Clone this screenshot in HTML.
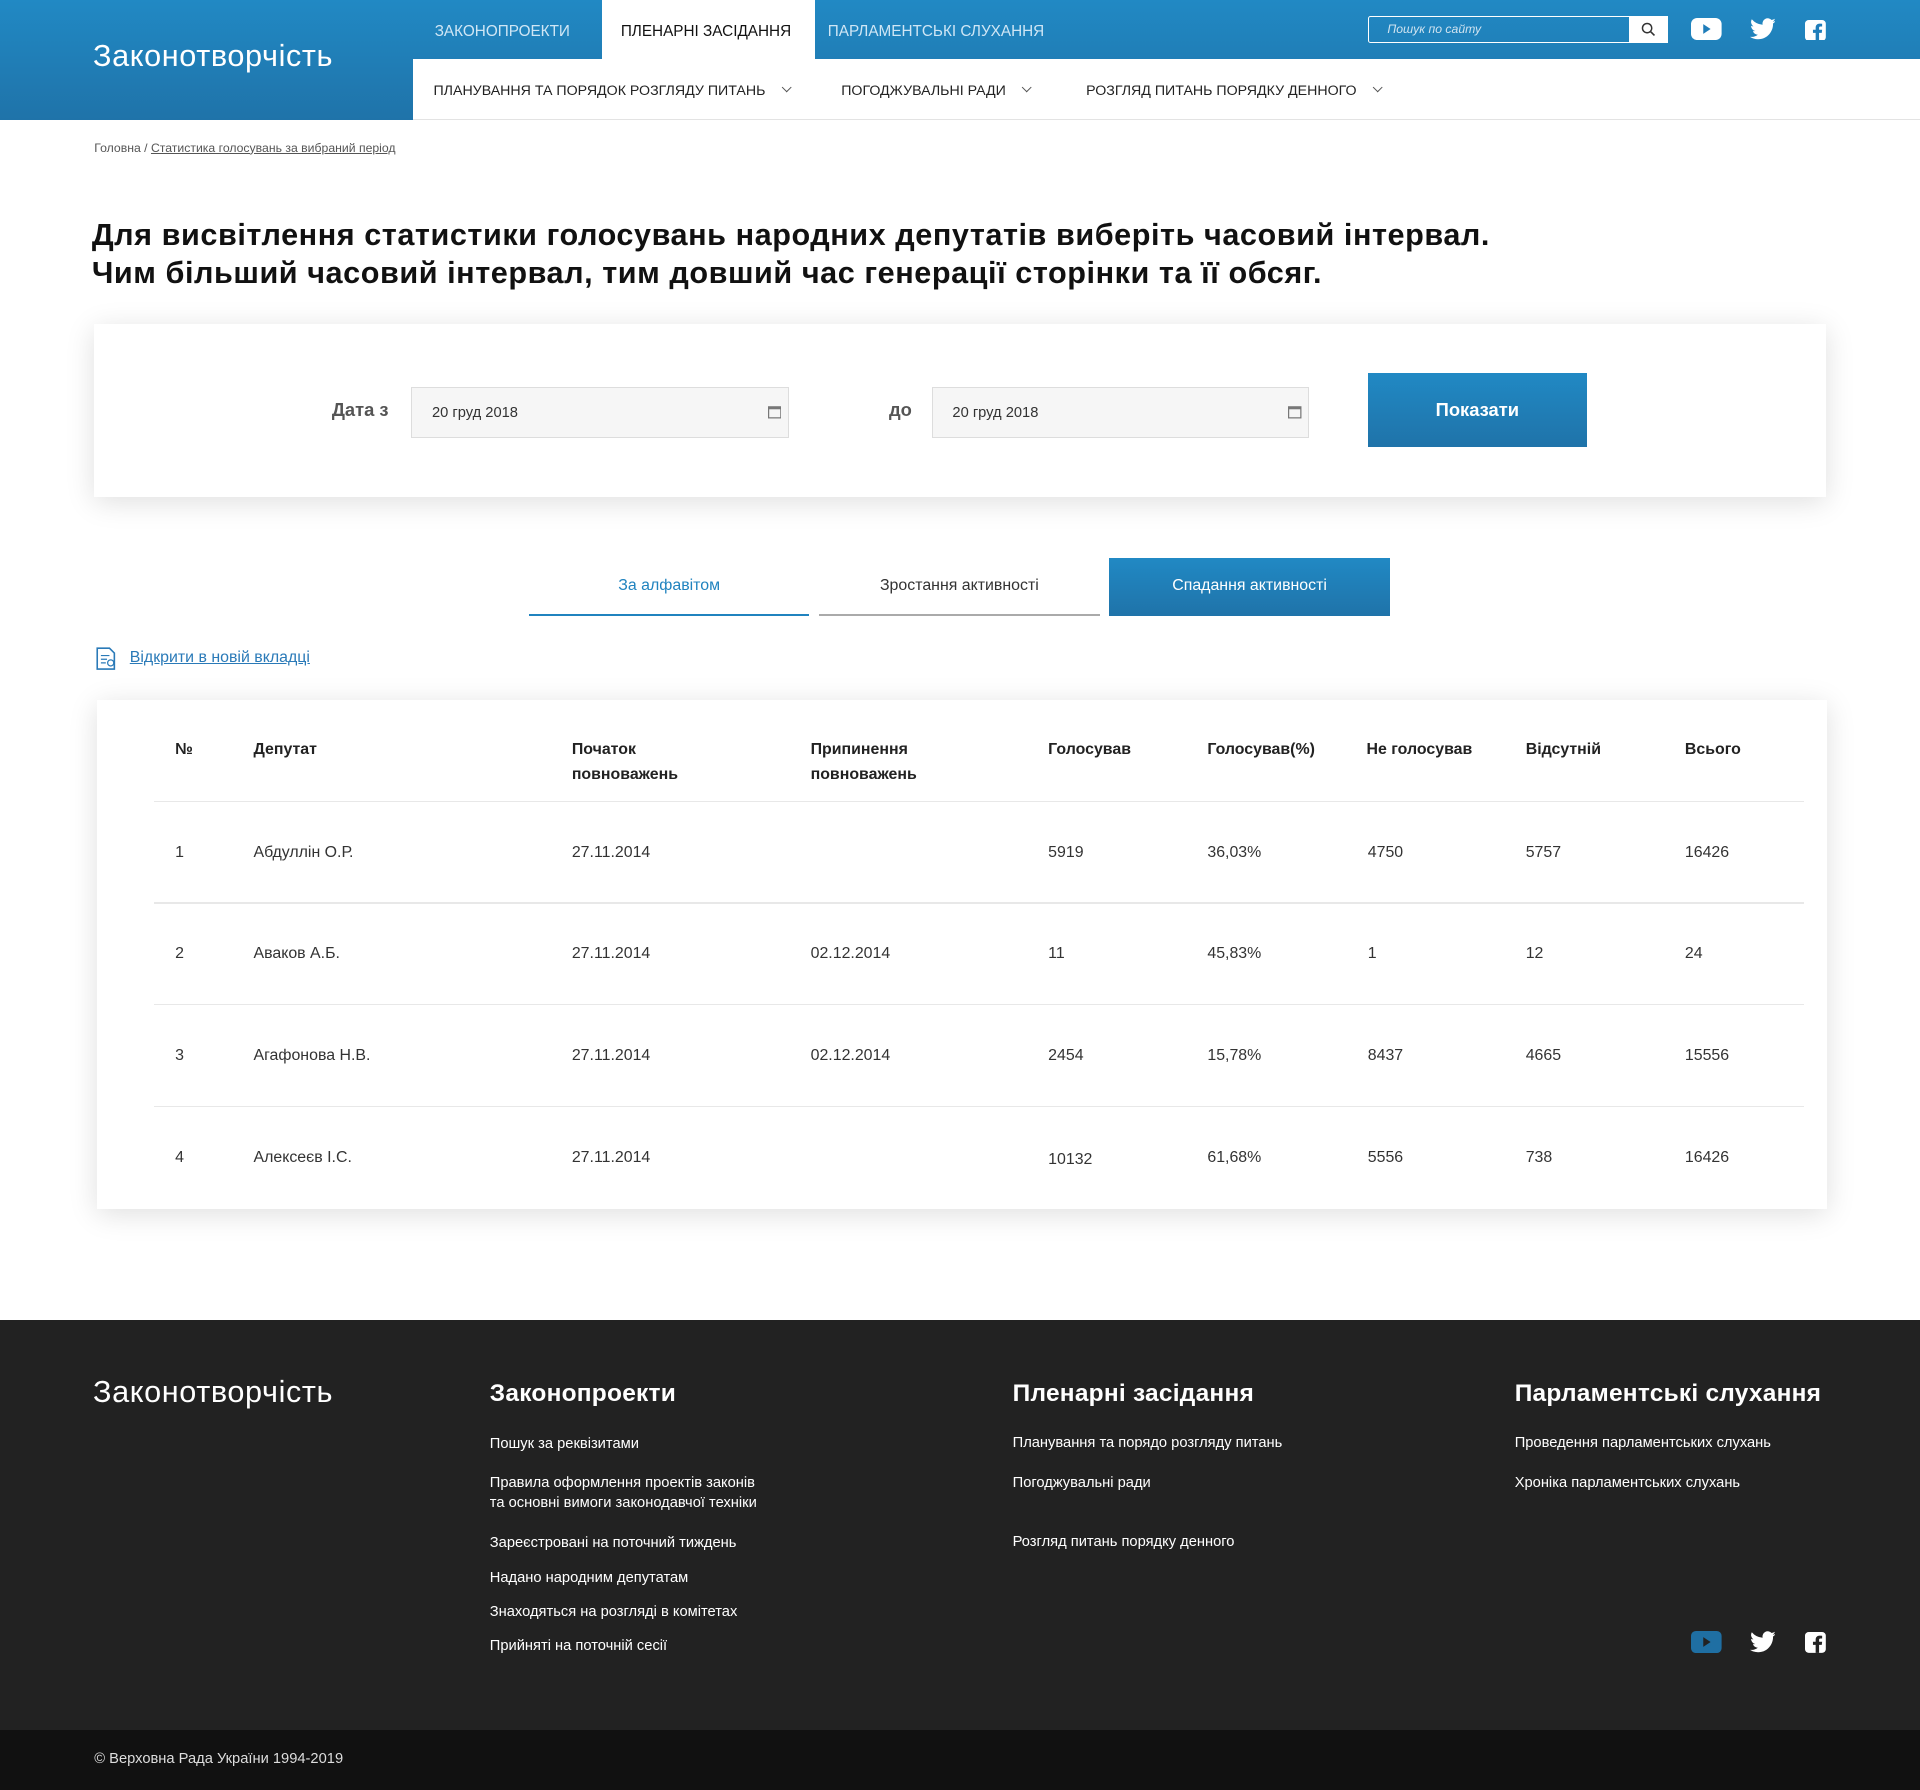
<!DOCTYPE html>
<html><head><meta charset="utf-8"><style>
html{zoom:1.22449}
*{box-sizing:border-box;margin:0;padding:0}
body{width:1568px;height:1462px;position:relative;font-family:"Liberation Sans","DejaVu Sans",sans-serif;background:#fff;color:#222;overflow:hidden}
.a{position:absolute;white-space:nowrap}
.hdr{position:absolute;left:0;top:0;width:1568px;height:98px;background:linear-gradient(#2189c4,#1f73a9)}
.sub{position:absolute;left:337px;top:48px;width:1231px;height:50px;background:#fff;border-bottom:1px solid #e3e3e3}
.tn{font-size:12.5px;color:#cfe6f5;top:19px}
.sn{font-size:11.6px;color:#222;top:68px}
.chev{display:inline-block;width:6px;height:6px;border-right:1px solid #555;border-bottom:1px solid #555;transform:rotate(45deg);margin-left:14px;position:relative;top:-3px}
.card{position:absolute;background:#fff;box-shadow:0 4px 22px rgba(0,0,0,.13)}
.inp{position:absolute;height:42px;width:308px;background:#f6f6f6;border:1px solid #ddd;font-size:12px;padding:14px 16px;color:#333}
.th{font-size:13px;font-weight:bold;color:#222;line-height:20px;top:603px}
.td{font-size:13px;color:#333;margin-top:2px}
.hl{position:absolute;left:126px;width:1347px;height:1px;background:#e8e8e8}
.fh{font-size:20px;font-weight:bold;color:#fff;top:1127px;letter-spacing:.2px}
.fl{font-size:12px;color:#fff;line-height:16px;margin-top:1px}
</style></head><body>
<div class="hdr"></div>
<div class="a" style="left:76px;top:32px;font-size:25px;color:#fff;letter-spacing:.5px">Законотворчість</div>
<div class="a" style="left:492px;top:0;width:174px;height:49px;background:#fff"></div>
<div class="a tn" style="left:355px">ЗАКОНОПРОЕКТИ</div>
<div class="a tn" style="left:507px;color:#111">ПЛЕНАРНІ ЗАСІДАННЯ</div>
<div class="a tn" style="left:676px">ПАРЛАМЕНТСЬКІ СЛУХАННЯ</div>
<div class="a" style="left:1117px;top:13px;width:245px;height:22px;border:1px solid #fff;border-radius:2px"></div>
<div class="a" style="left:1133px;top:18px;font-size:10px;font-style:italic;color:#cfe3f0">Пошук по сайту</div>
<div class="a" style="left:1330px;top:13px;width:32px;height:22px;background:#fff"></div>
<svg class="a" style="left:1340px;top:18px" width="12" height="12" viewBox="0 0 12 12"><circle cx="5" cy="5" r="3.8" fill="none" stroke="#333" stroke-width="1.2"/><path d="M8 8l3 3" stroke="#333" stroke-width="1.3"/></svg>
<svg class="a" style="left:1381px;top:15px" width="25" height="18" viewBox="0 0 25 18"><rect width="25" height="18" rx="5" fill="#fff"/><path d="M10 5l6 4-6 4z" fill="#1f7dba"/></svg>
<svg class="a" style="left:1429px;top:15px" width="21" height="18" viewBox="0 0 24 20"><path fill="#fff" d="M24 2.4a10 10 0 0 1-2.8.8A5 5 0 0 0 23.3.4a10 10 0 0 1-3.1 1.2A4.9 4.9 0 0 0 11.8 6 14 14 0 0 1 1.7.9a4.9 4.9 0 0 0 1.5 6.6A4.9 4.9 0 0 1 1 6.9a4.9 4.9 0 0 0 3.9 4.9 5 5 0 0 1-2.2.1 4.9 4.9 0 0 0 4.6 3.4A9.9 9.9 0 0 1 0 17.3 14 14 0 0 0 7.5 19.5c9 0 14-7.5 14-14v-.6A10 10 0 0 0 24 2.4z"/></svg>
<svg class="a" style="left:1474px;top:16px" width="17" height="17" viewBox="0 0 17 17"><rect width="17" height="17" rx="3" fill="#fff"/><path d="M11.5 17V10.5h2.2l.3-2.5h-2.5V6.5c0-.7.2-1.2 1.2-1.2H14V3.1a18 18 0 0 0-2-.1c-2 0-3.3 1.2-3.3 3.4V8H6.5v2.5h2.2V17z" fill="#1f7dba"/></svg>
<div class="sub"></div>
<div class="a sn" style="left:354px">ПЛАНУВАННЯ ТА ПОРЯДОК РОЗГЛЯДУ ПИТАНЬ<span class="chev"></span></div>
<div class="a sn" style="left:687px">ПОГОДЖУВАЛЬНІ РАДИ<span class="chev"></span></div>
<div class="a sn" style="left:887px">РОЗГЛЯД ПИТАНЬ ПОРЯДКУ ДЕННОГО<span class="chev"></span></div>
<div class="a" style="left:77px;top:115px;font-size:10px;color:#555">Головна / <span style="text-decoration:underline">Статистика голосувань за вибраний період</span></div>
<div class="a" style="left:75px;top:177px;font-size:25px;font-weight:bold;line-height:31px;color:#111;letter-spacing:.45px">Для висвітлення статистики голосувань народних депутатів виберіть часовий інтервал.<br>Чим більший часовий інтервал, тим довший час генерації сторінки та її обсяг.</div>
<div class="card" style="left:77px;top:265px;width:1414px;height:141px"></div>
<div class="a" style="left:271px;top:326px;font-size:15px;font-weight:bold;color:#555">Дата з</div>
<div class="inp" style="left:336px;top:316px">20 груд 2018</div>
<div class="a" style="left:726px;top:326px;font-size:15px;font-weight:bold;color:#555">до</div>
<div class="inp" style="left:761px;top:316px">20 груд 2018</div>
<svg class="a" style="left:627px;top:331px" width="11" height="11" viewBox="0 0 11 11"><rect x=".5" y="1.5" width="10" height="9" fill="none" stroke="#777"/><rect x=".5" y="1.5" width="10" height="2" fill="#777"/></svg>
<svg class="a" style="left:1052px;top:331px" width="11" height="11" viewBox="0 0 11 11"><rect x=".5" y="1.5" width="10" height="9" fill="none" stroke="#777"/><rect x=".5" y="1.5" width="10" height="2" fill="#777"/></svg>
<div class="a" style="left:1117px;top:305px;width:179px;height:60px;background:linear-gradient(#2189c4,#1f73a9);color:#fff;font-size:15px;font-weight:bold;text-align:center;line-height:60px">Показати</div>
<div class="a" style="left:432px;top:456px;width:229px;height:47px;border-bottom:2px solid #2083bf;color:#2083bf;font-size:13px;text-align:center;line-height:46px">За алфавітом</div>
<div class="a" style="left:669px;top:456px;width:229px;height:47px;border-bottom:2px solid #aaa;color:#333;font-size:13px;text-align:center;line-height:46px">Зростання активності</div>
<div class="a" style="left:906px;top:456px;width:229px;height:47px;background:linear-gradient(#2189c4,#1f73a9);color:#fff;font-size:13px;text-align:center;line-height:46px">Спадання активності</div>
<svg class="a" style="left:78px;top:528px" width="18" height="19" viewBox="0 0 18 19"><path d="M1 1h10l4 4v13H1z" fill="none" stroke="#2a7ab8" stroke-width="1.3"/><path d="M4 7h7M4 10h5M4 13h4" stroke="#2a7ab8"/><circle cx="12" cy="13" r="2.5" fill="none" stroke="#2a7ab8"/></svg>
<div class="a" style="left:106px;top:530px;font-size:13px;color:#2a7ab8;text-decoration:underline">Відкрити в новій вкладці</div>
<div class="card" style="left:79px;top:572px;width:1413px;height:415px"></div>
<div class="a th" style="left:143px">№</div>
<div class="a th" style="left:207px">Депутат</div>
<div class="a th" style="left:467px">Початок<br>повноважень</div>
<div class="a th" style="left:662px">Припинення<br>повноважень</div>
<div class="a th" style="left:856px">Голосував</div>
<div class="a th" style="left:986px">Голосував(%)</div>
<div class="a th" style="left:1116px">Не голосував</div>
<div class="a th" style="left:1246px">Відсутній</div>
<div class="a th" style="left:1376px">Всього</div>
<div class="hl" style="top:654px"></div>
<div class="hl" style="top:737px"></div>
<div class="hl" style="top:820px"></div>
<div class="hl" style="top:903px"></div>
<div class="a td" style="left:143px;top:687px">1</div><div class="a td" style="left:207px;top:687px">Абдуллін О.Р.</div><div class="a td" style="left:467px;top:687px">27.11.2014</div><div class="a td" style="left:856px;top:687px">5919</div><div class="a td" style="left:986px;top:687px">36,03%</div><div class="a td" style="left:1117px;top:687px">4750</div><div class="a td" style="left:1246px;top:687px">5757</div><div class="a td" style="left:1376px;top:687px">16426</div>
<div class="a td" style="left:143px;top:770px">2</div><div class="a td" style="left:207px;top:770px">Аваков А.Б.</div><div class="a td" style="left:467px;top:770px">27.11.2014</div><div class="a td" style="left:662px;top:770px">02.12.2014</div><div class="a td" style="left:856px;top:770px">11</div><div class="a td" style="left:986px;top:770px">45,83%</div><div class="a td" style="left:1117px;top:770px">1</div><div class="a td" style="left:1246px;top:770px">12</div><div class="a td" style="left:1376px;top:770px">24</div>
<div class="a td" style="left:143px;top:853px">3</div><div class="a td" style="left:207px;top:853px">Агафонова Н.В.</div><div class="a td" style="left:467px;top:853px">27.11.2014</div><div class="a td" style="left:662px;top:853px">02.12.2014</div><div class="a td" style="left:856px;top:853px">2454</div><div class="a td" style="left:986px;top:853px">15,78%</div><div class="a td" style="left:1117px;top:853px">8437</div><div class="a td" style="left:1246px;top:853px">4665</div><div class="a td" style="left:1376px;top:853px">15556</div>
<div class="a td" style="left:143px;top:936px">4</div><div class="a td" style="left:207px;top:936px">Алексеєв І.С.</div><div class="a td" style="left:467px;top:936px">27.11.2014</div><div class="a td" style="left:856px;top:938px">10132</div><div class="a td" style="left:986px;top:936px">61,68%</div><div class="a td" style="left:1117px;top:936px">5556</div><div class="a td" style="left:1246px;top:936px">738</div><div class="a td" style="left:1376px;top:936px">16426</div>
<div class="a" style="left:0;top:1078px;width:1568px;height:335px;background:#222"></div>
<div class="a" style="left:0;top:1413px;width:1568px;height:49px;background:#111"></div>
<div class="a" style="left:76px;top:1123px;font-size:25px;color:#fff;letter-spacing:.5px">Законотворчість</div>
<div class="a fh" style="left:400px">Законопроекти</div>
<div class="a fh" style="left:827px">Пленарні засідання</div>
<div class="a fh" style="left:1237px">Парламентські слухання</div>
<div class="a fl" style="left:400px;top:1171px">Пошук за реквізитами</div>
<div class="a fl" style="left:400px;top:1203px">Правила оформлення проектів законів<br>та основні вимоги законодавчої техніки</div>
<div class="a fl" style="left:400px;top:1252px">Зареєстровані на поточний тиждень</div>
<div class="a fl" style="left:400px;top:1280px">Надано народним депутатам</div>
<div class="a fl" style="left:400px;top:1308px">Знаходяться на розгляді в комітетах</div>
<div class="a fl" style="left:400px;top:1336px">Прийняті на поточній сесії</div>
<div class="a fl" style="left:827px;top:1170px">Планування та порядо розгляду питань</div>
<div class="a fl" style="left:827px;top:1203px">Погоджувальні ради</div>
<div class="a fl" style="left:827px;top:1251px">Розгляд питань порядку денного</div>
<div class="a fl" style="left:1237px;top:1170px">Проведення парламентських слухань</div>
<div class="a fl" style="left:1237px;top:1203px">Хроніка парламентських слухань</div>
<svg class="a" style="left:1381px;top:1332px" width="25" height="18" viewBox="0 0 25 18"><rect width="25" height="18" rx="4" fill="#1f6fa3"/><path d="M10 5l6 4-6 4z" fill="#222"/></svg>
<svg class="a" style="left:1429px;top:1332px" width="21" height="18" viewBox="0 0 24 20"><path fill="#fff" d="M24 2.4a10 10 0 0 1-2.8.8A5 5 0 0 0 23.3.4a10 10 0 0 1-3.1 1.2A4.9 4.9 0 0 0 11.8 6 14 14 0 0 1 1.7.9a4.9 4.9 0 0 0 1.5 6.6A4.9 4.9 0 0 1 1 6.9a4.9 4.9 0 0 0 3.9 4.9 5 5 0 0 1-2.2.1 4.9 4.9 0 0 0 4.6 3.4A9.9 9.9 0 0 1 0 17.3 14 14 0 0 0 7.5 19.5c9 0 14-7.5 14-14v-.6A10 10 0 0 0 24 2.4z"/></svg>
<svg class="a" style="left:1474px;top:1333px" width="17" height="17" viewBox="0 0 17 17"><rect width="17" height="17" rx="3" fill="#fff"/><path d="M11.5 17V10.5h2.2l.3-2.5h-2.5V6.5c0-.7.2-1.2 1.2-1.2H14V3.1a18 18 0 0 0-2-.1c-2 0-3.3 1.2-3.3 3.4V8H6.5v2.5h2.2V17z" fill="#222"/></svg>
<div class="a" style="left:77px;top:1430px;font-size:12px;color:#ddd">© Верховна Рада України 1994-2019</div>
</body></html>
